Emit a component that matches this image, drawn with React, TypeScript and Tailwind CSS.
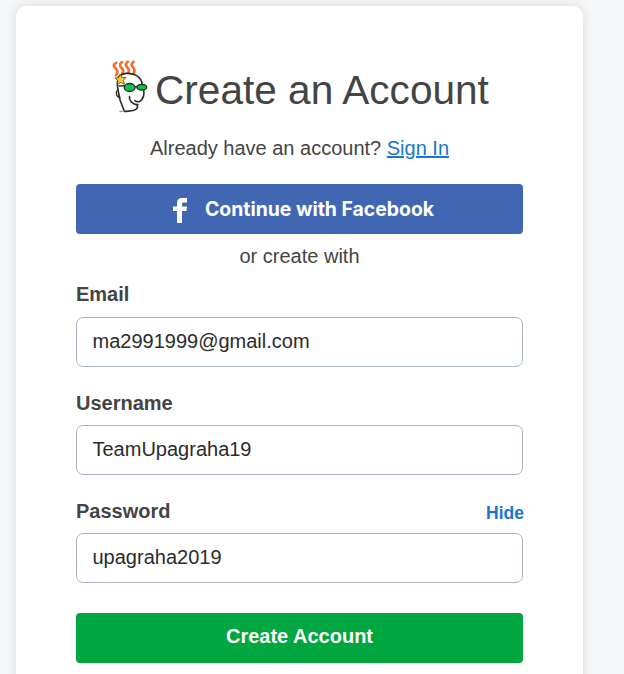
import React from 'react';

function MascotLogo() {
  return (
    <svg width="36" height="54" viewBox="0 0 36 54" fill="none" className="block shrink-0" aria-hidden="true">
      <g stroke="#f0702e" strokeWidth="2.7" strokeLinecap="round" strokeLinejoin="round">
        <path d="M4.2 2.8C0 5.2 2.2 6.8 4 8.6S5.8 12.5 4 15.4" />
        <path d="M10 2.2C6.4 4.8 8.4 6.6 10 8.3S11.6 11.5 10.3 13.4" />
        <path d="M15.8 1.8C12.4 4.4 14.2 6.2 15.8 8S17.4 11 16.2 13" />
        <path d="M21.6 1.8C18.2 4.4 20 6.2 21.5 8S23 11.2 21.6 13.6" />
      </g>
      <path d="M6 17.5C4.8 22.5 5.2 27 6.2 31L8.2 40.5 12.4 51.5C16 50.6 21.5 52 24.6 48.8 25.6 47.6 25.4 46.2 24.8 44.8 28.6 43.4 31.6 37.4 30.6 33.4L29.8 29.5C31 23.8 28.8 18 24.2 15.4 18 12.2 10 12.6 6 17.5Z" fill="#fff" />
      <path d="M24.8 44.8C25.8 46 25.7 47.6 24.6 48.8 21.5 52 16 50.6 12.4 51.5L8.2 40.5 6.2 31C5.2 27 4.8 22.5 6 17.5 10 12.6 18 12.2 24.2 15.4 28.2 17.8 30 21 30.2 24.5M31.8 30C32.4 35 31.2 39.2 27.8 41.4 25.6 42.4 24.4 41.6 22.8 40.6M17.5 36.5C16.8 39.4 19.8 44.8 25.8 44.5" stroke="#292929" strokeWidth="1.6" strokeLinecap="round" strokeLinejoin="round" />
      <path d="M6.2 30C3.3 31 3.8 37 7.7 37.5M7.2 26 13.5 25.6" stroke="#292929" strokeWidth="1.3" strokeLinecap="round" />
      <path d="M7.5 51.4H10.5" stroke="#999" strokeWidth="1.5" />
      <path d="M8 13.8 9.8 17.4 14 17.4 11.3 20.4 12.5 24.3 8.7 22.4 5.4 24.7 6 20.8 3.2 18.2 6.9 17.6Z" fill="#ffcd28" stroke="#665321" strokeWidth="0.9" />
      <g fill="#10c04c" stroke="#182c1d" strokeWidth="1.3">
        <ellipse cx="17.6" cy="27.5" rx="5.4" ry="4" />
        <ellipse cx="29.8" cy="27.2" rx="4.9" ry="2.9" />
        <path d="M22.8 26.8H25.2" />
      </g>
    </svg>
  );
}

type FieldProps = { id: string; label: string; value: string; action?: string; labelClass?: string };

function Field({ id, label, value, action, labelClass = '' }: FieldProps) {
  return (
    <div>
      <div className="flex h-[33px] items-start justify-between">
        <label htmlFor={id} className={`text-[20px] leading-5 font-bold text-[#444] ${labelClass}`}>{label}</label>
        {action && <button type="button" className="-mr-px mt-1 text-[17.5px] leading-[18px] font-bold text-[#1976d2]">{action}</button>}
      </div>
      <input id={id} type="text" defaultValue={value} className="block h-[50px] w-full rounded-[7px] border border-[#a9b4c0] bg-white px-[15.5px] pb-[2px] text-[20px] text-[#2b2b2b] outline-none" />
    </div>
  );
}

export default function App() {
  return (
    <main className="h-[674px] w-full overflow-hidden bg-[#f5f7f8] pt-1.5 pl-4 font-['Liberation_Sans',Arial,sans-serif] text-[#444]">
      <section className="h-[720px] w-[567px] rounded-[10px] bg-white px-[60px] pt-[54px] shadow-[0_0_12px_rgba(0,0,0,0.12)]">
        <header className="flex h-[64px] items-start pl-[36px]">
          <MascotLogo />
          <h1 className="mt-[7px] ml-[7px] text-[40.6px] leading-[46px] whitespace-nowrap">Create an Account</h1>
        </header>
        <p className="mt-[12px] text-center text-[20px] leading-6">
          Already have an account? <a href="#signin" className="text-[#1976d2] underline">Sign In</a>
        </p>
        <button type="button" className="mt-[24px] flex h-[50px] w-full items-center rounded-[4px] bg-[#4267b2] pl-[97px] text-white">
          <svg width="14" height="25" viewBox="0 0 14 25" fill="currentColor" className="mt-[2px] block">
            <path d="M4 25V13H0V8.5h4V5.5C4 1.8 5.8 0 9.3 0H14v4.5h-3C9.3 4.5 9 5.1 9 6.5v2h5l-.6 4.5H9v12Z" />
          </svg>
          <span className="-mt-px ml-[18px] text-[19.4px] leading-6 font-bold whitespace-nowrap font-['Inter',sans-serif]">Continue with Facebook</span>
        </button>
        <p className="mt-[10px] text-center text-[20px] leading-6">or create with</p>
        <form className="mt-[16px] flex flex-col">
          <div className="flex flex-col gap-[25px]">
            <Field id="email" label="Email" value="ma2991999@gmail.com" />
            <Field id="username" label="Username" value="TeamUpagraha19" labelClass="mt-px" />
            <Field id="password" label="Password" value="upagraha2019" action="Hide" labelClass="mt-px" />
          </div>
          <button type="button" className="mt-[30px] h-[50px] rounded-[4px] bg-[#00a63f] pb-[4px] text-[20px] leading-6 font-bold text-white">Create Account</button>
        </form>
      </section>
    </main>
  );
}
